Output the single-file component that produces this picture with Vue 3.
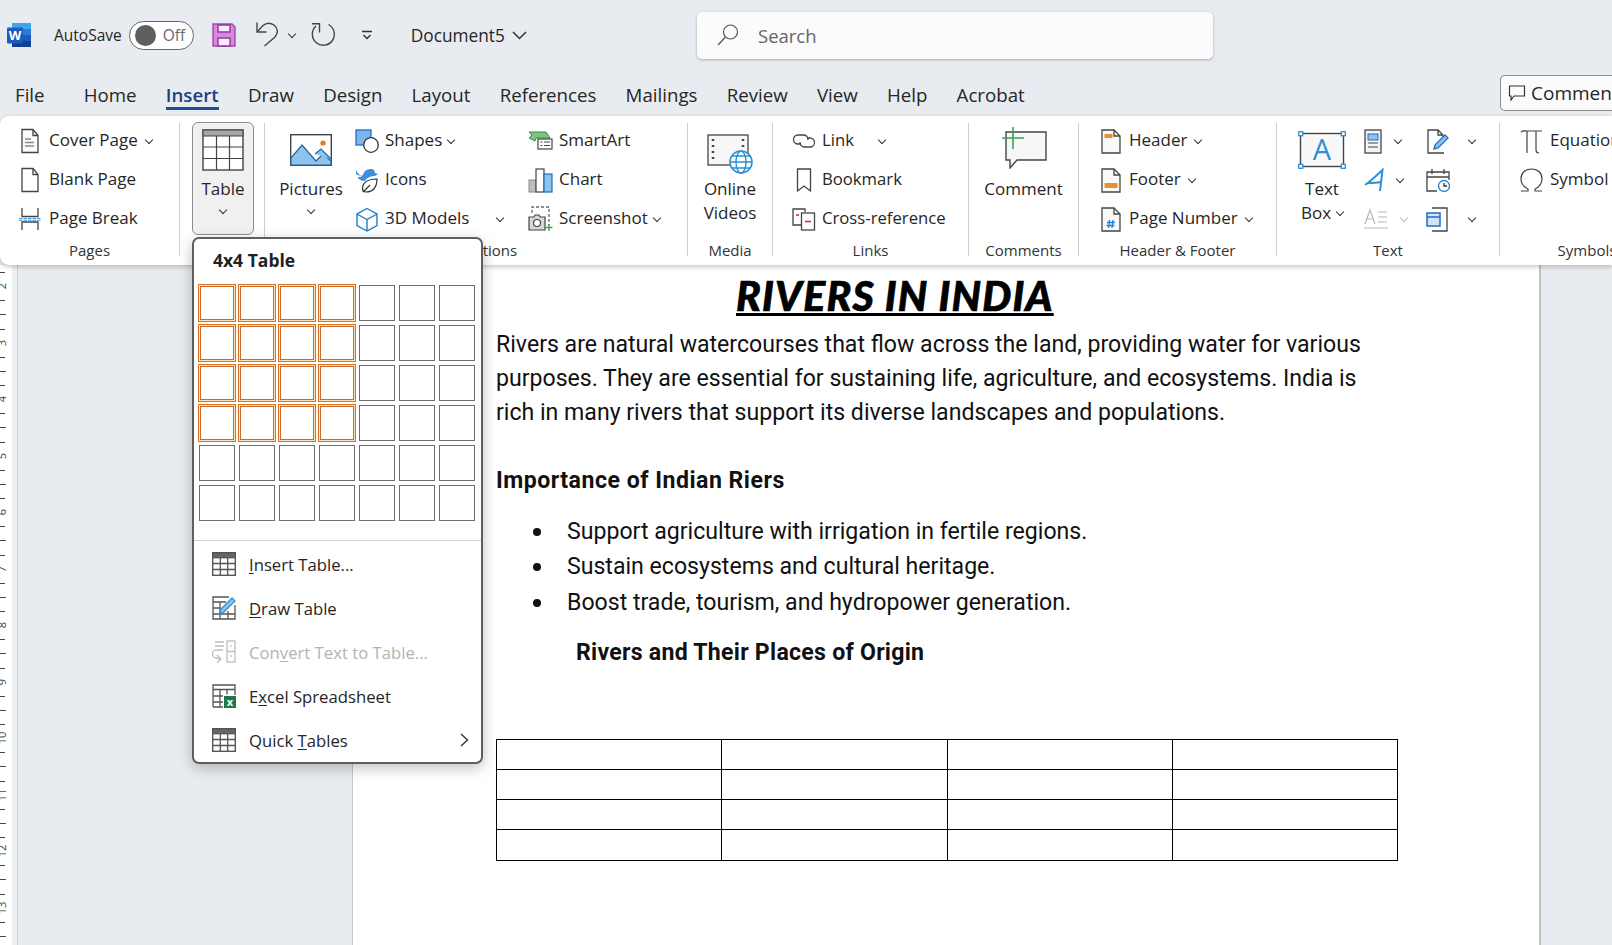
<template>
  <div class="app">
    <!-- title bar -->
    <div class="titlebar">
      <div class="qat">
        <svg class="word" width="24" height="24" viewBox="0 0 24 24">
          <rect x="5" y="0" width="19" height="6" fill="#41a5ee" />
          <rect x="5" y="6" width="19" height="6" fill="#2b7cd3" />
          <rect x="5" y="12" width="19" height="6" fill="#185abd" />
          <rect x="5" y="18" width="19" height="6" fill="#103f91" />
          <rect x="0" y="4.500" width="16" height="16" rx="1" fill="#1a5cbf" />
          <text x="8" y="17" text-anchor="middle" class="word-w">W</text>
        </svg>
        <span class="autosave">AutoSave</span>
        <div class="toggle"><i class="knob"></i><span>Off</span></div>
        <svg class="save" width="24" height="24" viewBox="0 0 24 24">
          <path d="M1 1h19l3 3v19H1z" fill="#d48ad8" stroke="#a544b4" stroke-width="1.4" />
          <path d="M6 2h12v7H6zM6 15h12v8H6z" fill="#fbeafc" stroke="#8f3a9e" stroke-width="1.4" />
        </svg>
        <svg class="undo" width="24" height="26" viewBox="0 0 24 26" fill="none" stroke="#444" stroke-width="1.4">
          <path d="M1 .5V10h9.500" />
          <path d="M1.500 9.500 7 3.500c3.500-3 8-2.500 11-.5 4 3 4.500 8 1 12L8.500 24" />
        </svg>
        <i class="chev qchev"></i>
        <svg class="redo" width="26" height="26" viewBox="0 0 26 26" fill="none" stroke="#444" stroke-width="1.4">
          <path d="M2 1.700h7.500V10.500" />
          <path d="M6 4a11 11 0 1 0 12.500-1.500" />
        </svg>
        <svg class="custom" width="12" height="10" viewBox="0 0 12 10" fill="none" stroke="#333" stroke-width="1.5">
          <path d="M1 1.500h10M2.500 5 6 8.500 9.500 5" />
        </svg>
        <span class="docname">Document5</span>
        <svg class="docchev" width="15" height="9" viewBox="0 0 15 9" fill="none" stroke="#333" stroke-width="1.5">
          <path d="M1 1l6.500 6.500L14 1" />
        </svg>
      </div>
      <div class="search">
        <svg width="22" height="22" viewBox="0 0 22 22" fill="none" stroke="#555" stroke-width="1.2">
          <circle cx="13.500" cy="8" r="7" />
          <path d="M8.500 13 1 21" />
        </svg>
        <span>Search</span>
      </div>
    </div>

    <!-- tabs -->
    <div class="tabs">
      <span v-for="t in tabs" :key="t" class="tab" :class="{ on: t === 'Insert', file: t === 'File' }">{{ t }}</span>
      <div class="comments">
        <svg width="18" height="18" viewBox="0 0 18 18" fill="none" stroke="#333" stroke-width="1.2">
          <path d="M1.500 2h15v10H6l-3 4v-4H1.500z" />
        </svg>
        <span>Comments</span>
      </div>
    </div>

    <!-- ribbon -->
    <div class="ribbon">
      <section class="group pages">
        <div class="body">
          <div class="rows">
            <div class="row">
              <svg width="22" height="26" viewBox="0 0 22 26" fill="none" stroke="#444" stroke-width="1.3">
                <path d="M3 1.500h11l5 6v17H3z" fill="#fafafa" />
                <path d="M14 1.500v6h5" />
                <path d="M6 11h6M6 14.500h9M6 18h9" stroke="#8a8a8a" />
              </svg>
              <span>Cover Page</span><i class="chev"></i>
            </div>
            <div class="row">
              <svg width="22" height="26" viewBox="0 0 22 26" fill="none" stroke="#444" stroke-width="1.3">
                <path d="M3 1.500h11l5 6v17H3z" fill="#fff" />
                <path d="M14 1.500v6h5" />
              </svg>
              <span>Blank Page</span>
            </div>
            <div class="row">
              <svg width="22" height="24" viewBox="0 0 22 24" fill="none" stroke="#444" stroke-width="1.3">
                <path d="M3 1v8.500h16V1M3 23v-8h16V23" />
                <path d="M0 11.500h22M0 13.300h22" stroke="#2a8ad4" stroke-dasharray="3.500 1" stroke-width=".9" />
              </svg>
              <span>Page Break</span>
            </div>
          </div>
        </div>
        <div class="label">Pages</div>
      </section>

      <section class="group tables">
        <div class="body">
          <div class="big tablebtn">
            <div class="big-icon">
              <svg width="42" height="42" viewBox="0 0 42 42">
                <rect x="1" y="1" width="40" height="40" fill="#fff" stroke="#444" stroke-width="1.4" />
                <rect x="1" y="1" width="40" height="6" fill="#a6a6a6" stroke="#444" stroke-width="1" />
                <path d="M14.500 7v34M27.500 7v34M1 18h40M1 29.500h40" stroke="#444" stroke-width="1.200" fill="none" />
              </svg>
            </div>
            <span>Table</span>
            <i class="chev"></i>
          </div>
        </div>
        <div class="label"></div>
      </section>

      <section class="group illus">
        <div class="body">
          <div class="big pictures">
            <div class="big-icon">
              <svg width="42" height="32" viewBox="0 0 42 32">
                <rect x=".7" y=".7" width="40.600" height="30.600" fill="#fff" stroke="#444" stroke-width="1.400" />
                <path d="M1 24 12 11l14 16 5-5 2-2 8 7v4H1z" fill="#8fc3ec" stroke="#2367a0" stroke-width="1.200" />
                <path d="M25 20l6-5 10 10" fill="#8fc3ec" stroke="#2367a0" stroke-width="1.200" />
                <circle cx="33" cy="9" r="2.600" fill="#e07a1f" />
              </svg>
            </div>
            <span>Pictures</span>
            <i class="chev"></i>
          </div>
          <div class="rows col-a">
            <div class="row">
              <svg width="24" height="25" viewBox="0 0 24 25">
                <rect x="1" y="1" width="15" height="15" fill="#7fb4ea" stroke="#1f6fc4" stroke-width="1.300" />
                <circle cx="16" cy="16" r="7.300" fill="#fff" stroke="#333" stroke-width="1.300" />
              </svg>
              <span>Shapes</span><i class="chev"></i>
            </div>
            <div class="row">
              <svg width="24" height="25" viewBox="0 0 24 25">
                <path d="M1 6c3 2 6 2 7 1 1-4 4-6 8-6 3 0 4 2 4 4l3 1-3 2c-3 0-8 1-10 5-2 0-7-1-7-4 2 0 3 0 4-1-3-1-5-4-6-6z" fill="#3f8fd8" />
                <path d="M8 23c-2-7 3-12 14-12 0 8-4 13-11 13-1 0-2-1-3-1zm0 1 7-7" fill="#fff" stroke="#333" stroke-width="1.200" />
              </svg>
              <span>Icons</span>
            </div>
            <div class="row">
              <svg width="24" height="25" viewBox="0 0 24 25" fill="none" stroke="#1d7fc9" stroke-width="1.400">
                <path d="M12 1.500 22 7v11.500L12 24 2 18.500V7zM2 7l10 5.500L22 7M12 12.500V24" />
              </svg>
              <span>3D Models</span><i class="chev far"></i>
            </div>
          </div>
          <div class="rows col-b">
            <div class="row">
              <svg width="25" height="25" viewBox="0 0 25 25">
                <path d="M1 3h17l4 6H8l-1 3 -6-3 3-3z" fill="#7cc47f" stroke="#2f8f45" stroke-width="1" />
                <rect x="10" y="10" width="14" height="10" fill="#fff" stroke="#444" stroke-width="1.200" />
                <path d="M12.500 13h2M16 13h6M12.500 16.500h2M16 16.500h6" stroke="#444" stroke-width="1.200" />
              </svg>
              <span>SmartArt</span>
            </div>
            <div class="row">
              <svg width="25" height="25" viewBox="0 0 25 25">
                <rect x="1" y="12" width="7" height="12" fill="#bdbdbd" stroke="#8a8a8a" />
                <rect x="8" y="1" width="8" height="23" fill="#fff" stroke="#444" stroke-width="1.200" />
                <rect x="16" y="6" width="8" height="18" fill="#8fc3ec" stroke="#1f6fc4" stroke-width="1.200" />
              </svg>
              <span>Chart</span>
            </div>
            <div class="row">
              <svg width="25" height="26" viewBox="0 0 25 26">
                <path d="M4 7V1h17v18" fill="none" stroke="#666" stroke-width="1.300" stroke-dasharray="3 2" />
                <path d="M1 11h5l1-2h4l1 2h5v13H1z" fill="#d8d8d8" stroke="#444" stroke-width="1.200" />
                <circle cx="9" cy="17" r="3.500" fill="#fff" stroke="#444" stroke-width="1.200" />
                <path d="M21 18v7M17.500 21.500h7" stroke="#3ba055" stroke-width="1.400" />
              </svg>
              <span>Screenshot</span><i class="chev"></i>
            </div>
          </div>
        </div>
        <div class="label">Illustrations</div>
      </section>

      <section class="group media">
        <div class="body">
          <div class="big online">
            <div class="big-icon">
              <svg class="shift-down" width="46" height="40" viewBox="0 0 46 40">
                <rect x="1" y="1" width="40" height="30" fill="#f7f7f7" stroke="#444" stroke-width="1.300" />
                <path d="M6 5v2M6 11v2M6 17v2M6 23v2M36 5v2M36 11v2" stroke="#444" stroke-width="2.500" />
                <circle cx="34" cy="28" r="11" fill="#fff" stroke="#2d8fd4" stroke-width="1.600" />
                <ellipse cx="34" cy="28" rx="5" ry="11" fill="none" stroke="#2d8fd4" stroke-width="1.400" />
                <path d="M23 28h22M25 22h18M25 34h18" stroke="#2d8fd4" stroke-width="1.400" />
              </svg>
            </div>
            <span>Online</span>
            <span>Videos</span>
          </div>
        </div>
        <div class="label">Media</div>
      </section>

      <section class="group links">
        <div class="body">
          <div class="rows">
            <div class="row">
              <svg width="24" height="16" viewBox="0 0 24 16" fill="none" stroke="#444" stroke-width="1.300">
                <path d="M9 11H6a4.500 4.500 0 0 1 0-9h6a4.500 4.500 0 0 1 4 5" />
                <path d="M15 5h3a4.500 4.500 0 0 1 0 9h-6a4.500 4.500 0 0 1-4-5" />
              </svg>
              <span>Link</span><i class="chev far"></i>
            </div>
            <div class="row">
              <svg width="24" height="25" viewBox="0 0 24 25" fill="none" stroke="#444" stroke-width="1.300">
                <path d="M5.500 1h13v22l-6.500-5-6.500 5z" />
              </svg>
              <span>Bookmark</span>
            </div>
            <div class="row">
              <svg width="24" height="25" viewBox="0 0 24 25" fill="none" stroke="#444" stroke-width="1.300">
                <path d="M10 18H1V2h12v3" />
                <rect x="9.500" y="6" width="13" height="17" fill="#fff" />
                <path d="M13 14.500h6" stroke="#d13438" stroke-width="1.600" />
                <path d="M4 8h3" stroke="#d13438" stroke-width="1.600" />
              </svg>
              <span>Cross-reference</span>
            </div>
          </div>
        </div>
        <div class="label">Links</div>
      </section>

      <section class="group commentsg">
        <div class="body">
          <div class="big newcomment">
            <div class="big-icon">
              <svg class="shift-up" width="46" height="42" viewBox="0 0 46 42">
                <path d="M5 5h40v28H16L9 41v-8H5z" fill="#f7f7f7" stroke="#444" stroke-width="1.400" />
                <path d="M12 0v22M1 11h22" stroke="#3ba055" stroke-width="1.600" />
              </svg>
            </div>
            <span>Comment</span>
          </div>
        </div>
        <div class="label">Comments</div>
      </section>

      <section class="group hf">
        <div class="body">
          <div class="rows">
            <div class="row">
              <svg width="20" height="25" viewBox="0 0 20 25">
                <path d="M1 1h12l6 6v17H1z" fill="#fafafa" stroke="#444" stroke-width="1.300" />
                <path d="M13 1v6h6" fill="none" stroke="#444" stroke-width="1.300" />
                <rect x="3.500" y="5" width="8" height="4" fill="#e8912d" />
              </svg>
              <span>Header</span><i class="chev"></i>
            </div>
            <div class="row">
              <svg width="20" height="25" viewBox="0 0 20 25">
                <path d="M1 1h12l6 6v17H1z" fill="#fafafa" stroke="#444" stroke-width="1.300" />
                <path d="M13 1v6h6" fill="none" stroke="#444" stroke-width="1.300" />
                <rect x="3.500" y="15" width="13" height="5" fill="#e8912d" />
              </svg>
              <span>Footer</span><i class="chev"></i>
            </div>
            <div class="row">
              <svg width="20" height="25" viewBox="0 0 20 25">
                <path d="M1 1h12l6 6v17H1z" fill="#fafafa" stroke="#444" stroke-width="1.300" />
                <path d="M13 1v6h6" fill="none" stroke="#444" stroke-width="1.300" />
                <path d="M8.500 13l-1 8M12 13l-1 8M6 15.500h8M5.500 18.500h8" stroke="#1f7fd1" stroke-width="1.300" />
              </svg>
              <span>Page Number</span><i class="chev"></i>
            </div>
          </div>
        </div>
        <div class="label">Header &amp; Footer</div>
      </section>

      <section class="group textg">
        <div class="body">
          <div class="big textbox">
            <div class="big-icon">
              <svg width="48" height="38" viewBox="0 0 48 38">
                <rect x="2.500" y="2.500" width="43" height="33" fill="#f8f8f8" stroke="#444" stroke-width="1.400" />
                <rect x=".7" y=".7" width="4" height="4" fill="#fff" stroke="#2d8fd4" stroke-width="1.300" />
                <rect x="43.300" y=".7" width="4" height="4" fill="#fff" stroke="#2d8fd4" stroke-width="1.300" />
                <rect x=".7" y="33.300" width="4" height="4" fill="#fff" stroke="#2d8fd4" stroke-width="1.300" />
                <rect x="43.300" y="33.300" width="4" height="4" fill="#fff" stroke="#2d8fd4" stroke-width="1.300" />
                <text x="24" y="29" text-anchor="middle" class="box-a">A</text>
              </svg>
            </div>
            <span>Text</span>
            <span class="boxline">Box<i class="chev"></i></span>
          </div>
          <div class="rows col-c">
            <div class="row">
              <svg width="18" height="25" viewBox="0 0 18 25">
                <rect x="1" y="1" width="16" height="23" fill="#f4f4f4" stroke="#444" stroke-width="1.300" />
                <rect x="4" y="5" width="10" height="6" fill="#8fc3ec" stroke="#1f6fc4" />
                <path d="M4 14h10M4 18h10" stroke="#9a9a9a" stroke-width="2" />
              </svg>
              <i class="chev"></i>
            </div>
            <div class="row">
              <svg width="20" height="25" viewBox="0 0 20 25" fill="none" stroke="#2d8fd4" stroke-width="2">
                <path d="M1 17C7 13 13 7 18.500 2L16 23M4 15c4 0 8 0 12.500-1" />
              </svg>
              <i class="chev"></i>
            </div>
            <div class="row off">
              <svg width="24" height="24" viewBox="0 0 24 24" fill="none" stroke="#b8b8b8" stroke-width="1.200">
                <path d="M1 17 6 3l5 14M3 12h6M14 5h9M14 10h9M14 15h9M0 21h24" />
              </svg>
              <i class="chev"></i>
            </div>
          </div>
          <div class="rows col-d">
            <div class="row">
              <svg width="23" height="25" viewBox="0 0 23 25" fill="none" stroke="#444" stroke-width="1.300">
                <path d="M12 24H2V1h10l5 5v3M12 1v5h5M2 24h16" />
                <path d="M8 20l1-4L19 6l3 3-10 10z" fill="#8fc3ec" stroke="#1f6fc4" />
              </svg>
              <i class="chev far"></i>
            </div>
            <div class="row">
              <svg width="24" height="25" viewBox="0 0 24 25" fill="none" stroke="#444" stroke-width="1.300">
                <path d="M11 23H1V4h22v8M1 9h22M6 1v5M18 1v5" />
                <circle cx="18" cy="18" r="5.500" fill="#fff" stroke="#1f7fd1" />
                <path d="M18 15v3h3" stroke="#333" />
              </svg>
            </div>
            <div class="row">
              <svg width="23" height="25" viewBox="0 0 23 25">
                <path d="M6 1h15v23H6" fill="none" stroke="#444" stroke-width="1.300" />
                <rect x="1" y="6" width="13" height="13" fill="#cfe4f7" stroke="#1f6fc4" stroke-width="1.500" />
                <path d="M1 10h13" stroke="#1f6fc4" stroke-width="1.500" />
              </svg>
              <i class="chev far"></i>
            </div>
          </div>
        </div>
        <div class="label">Text</div>
      </section>

      <section class="group symbols">
        <div class="body">
          <div class="rows">
            <div class="row">
              <svg width="23" height="25" viewBox="0 0 23 25" fill="none" stroke="#444" stroke-width="1.200">
                <path d="M1 3c2-2 4-1 6-1h15M7 2v22M16 2v19c0 2 1 3 3 3" />
              </svg>
              <span>Equation</span>
            </div>
            <div class="row">
              <svg width="23" height="25" viewBox="0 0 23 25" fill="none" stroke="#444" stroke-width="1.200">
                <path d="M1 23h7v-2C4 19 1 15 1 11 1 5 5 1 11.500 1S22 5 22 11c0 4-3 8-7 10v2h7" />
              </svg>
              <span>Symbol</span>
            </div>
          </div>
        </div>
        <div class="label">Symbols</div>
      </section>
    </div>

    <!-- document -->
    <div class="workspace">
      <div class="ruler">
        <div v-for="(m, i) in marks" :key="i" class="mark" :class="m.kind">
          <span v-if="m.kind === 'num'">{{ m.n }}</span>
        </div>
      </div>
      <div class="ruler-edge"></div>
      <div class="page">
        <h1 class="doc-title">RIVERS IN INDIA</h1>
        <p class="para">
          Rivers are natural watercourses that flow across the land, providing water for various<br />
          purposes. They are essential for sustaining life, agriculture, and ecosystems. India is<br />
          rich in many rivers that support its diverse landscapes and populations.
        </p>
        <h2 class="head">Importance of Indian Riers</h2>
        <ul class="list">
          <li>Support agriculture with irrigation in fertile regions.</li>
          <li>Sustain ecosystems and cultural heritage.</li>
          <li>Boost trade, tourism, and hydropower generation.</li>
        </ul>
        <h2 class="head sub">Rivers and Their Places of Origin</h2>
        <table class="doc-table">
          <tbody>
            <tr v-for="r in 4" :key="r">
              <td v-for="c in 4" :key="c"></td>
            </tr>
          </tbody>
        </table>
      </div>
    </div>

    <!-- table dropdown -->
    <div class="menu">
      <div class="menu-title">4x4 Table</div>
      <div class="picker">
        <i v-for="c in cells" :key="c.id" class="cell" :class="{ sel: c.sel }"></i>
      </div>
      <div class="menu-sep"></div>
      <div class="item">
        <svg width="24" height="24" viewBox="0 0 24 24" fill="none" stroke="#555" stroke-width="1.300">
          <rect x=".7" y=".7" width="22.600" height="22.600" fill="#fff" stroke-width="1.400" />
          <rect x=".7" y=".7" width="22.600" height="5" fill="#666" />
          <path d="M8.300 6v17M15.700 6v17M1 11.500h22M1 17.500h22" />
        </svg>
        <span><u>I</u>nsert Table...</span>
      </div>
      <div class="item">
        <svg width="24" height="24" viewBox="0 0 24 24" fill="none" stroke="#555" stroke-width="1.300">
          <path d="M17 1H1v22h22V9M1 6h13M8 6v17M16 15v8M1 12h7M1 18h22" />
          <path d="M8 18l1-5L20 2l3 3-11 11z" fill="#8fc3ec" stroke="#2d8fd4" />
        </svg>
        <span><u>D</u>raw Table</span>
      </div>
      <div class="item off">
        <svg width="24" height="24" viewBox="0 0 24 24" fill="none" stroke="#bdbdbd" stroke-width="1.300">
          <path d="M3 2h9M3 6h9M11 10H5a4 4 0 0 0-1 8l4 1M5 15l4 4-4 4" />
          <rect x="15" y="1" width="8" height="21" />
          <path d="M15 11.500h8M19 5v2M19 15v2" />
        </svg>
        <span>Con<u>v</u>ert Text to Table...</span>
      </div>
      <div class="item">
        <svg width="24" height="24" viewBox="0 0 24 24" fill="none" stroke="#555" stroke-width="1.300">
          <path d="M1 23V1h22v10M1 5.500h22M8 5.500V23M15 5.500v5M1 12h10M1 18h10M1 23h10" />
          <rect x="12" y="12" width="12" height="12" fill="#1d7a46" stroke="none" />
          <text x="18" y="22" text-anchor="middle" class="xl-x">x</text>
        </svg>
        <span>E<u>x</u>cel Spreadsheet</span>
      </div>
      <div class="item">
        <svg width="24" height="24" viewBox="0 0 24 24" fill="none" stroke="#555" stroke-width="1.300">
          <rect x=".7" y=".7" width="22.600" height="22.600" fill="#fff" stroke-width="1.400" />
          <rect x=".7" y=".7" width="22.600" height="5" fill="#666" />
          <path d="M8.300 6v17M15.700 6v17M1 11.500h22M1 17.500h22" />
        </svg>
        <span>Quick <u>T</u>ables</span>
        <svg class="arrow" width="9" height="14" viewBox="0 0 9 14" fill="none" stroke="#333" stroke-width="1.400">
          <path d="M1 1l6.500 6L1 13" />
        </svg>
      </div>
    </div>
  </div>
</template>

<script setup>
const tabs = ['File', 'Home', 'Insert', 'Draw', 'Design', 'Layout', 'References', 'Mailings', 'Review', 'View', 'Help', 'Acrobat']

// 7 x 6 picker, first four by four highlighted
const cells = []
for (let r = 0; r < 6; r++) {
  for (let c = 0; c < 7; c++) {
    cells.push({ id: r + '-' + c, sel: r < 4 && c < 4 })
  }
}

// vertical ruler: a number every fourth mark
const marks = [{ kind: 'tick' }]
for (let n = 2; n <= 13; n++) {
  marks.push({ kind: 'num', n }, { kind: 'tick' }, { kind: 'long' }, { kind: 'tick' })
}
</script>

<style>
html,
body {
  margin: 0;
  background: #e8ecf0;
  overflow: hidden;
}
</style>

<style scoped>
.app {
  position: relative;
  width: 1612px;
  height: 945px;
  overflow: hidden;
  background: #e8ecf0;
  color: #262626;
  font-family: "Open Sans", "Noto Sans", sans-serif;
  font-size: 17px;
}

.titlebar {
  display: flex;
  align-items: center;
  height: 70px;
}
.qat {
  display: flex;
  align-items: center;
  width: 697px;
  flex: none;
  padding-left: 7px;
  box-sizing: border-box;
}
.word-w {
  font: 700 13px "Open Sans", sans-serif;
  fill: #fff;
}
.autosave {
  margin-left: 23px;
  font-size: 15.5px;
}
.toggle {
  display: flex;
  align-items: center;
  width: 65px;
  height: 29px;
  margin-left: 7px;
  box-sizing: border-box;
  padding-left: 5px;
  border: 1px solid #666;
  border-radius: 15px;
  background: #fff;
  font-size: 15.5px;
  color: #6a6a6a;
}
.knob {
  width: 21px;
  height: 21px;
  border-radius: 50%;
  background: #5f5f5f;
  margin-right: 7px;
}
.save {
  margin-left: 18px;
}
.undo {
  margin-left: 20px;
}
.qchev {
  margin-left: 9px;
  margin-right: 15px;
}
.custom {
  margin-left: 25px;
}
.docname {
  margin-left: 38px;
  font-size: 17.3px;
}
.docchev {
  margin-left: 7px;
}
.search {
  display: flex;
  align-items: center;
  gap: 19px;
  width: 516px;
  height: 47px;
  box-sizing: border-box;
  padding-left: 20px;
  border-radius: 5px;
  background: #fbfbfb;
  box-shadow: 0 1px 3px rgba(0, 0, 0, 0.28);
  font-size: 18.5px;
  color: #666;
}

.tabs {
  display: flex;
  align-items: center;
  gap: 29.2px;
  height: 46px;
  padding-left: 15px;
  font-size: 18.7px;
}
.tab {
  position: relative;
  padding-top: 4px;
  line-height: 26px;
}
.tab.file {
  margin-right: 10px;
}
.tab.on {
  font-weight: 600;
  color: #1d3f7c;
}
.tab.on::after {
  content: "";
  position: absolute;
  left: 0;
  right: 0;
  bottom: -2px;
  height: 3px;
  background: #1a4d9e;
}
.comments {
  display: flex;
  align-items: center;
  gap: 5px;
  flex: none;
  width: 112px;
  height: 36px;
  margin-left: auto;
  padding-left: 7px;
  box-sizing: border-box;
  border: 1px solid #8c8c8c;
  border-right: 0;
  border-radius: 5px 0 0 5px;
  background: #fbfbfb;
  white-space: nowrap;
  overflow: hidden;
  font-size: 19px;
}
.comments svg {
  flex: none;
}

.ribbon {
  position: relative;
  z-index: 1;
  display: flex;
  height: 149px;
  box-sizing: border-box;
  padding-top: 7px;
  border-radius: 9px 0 0 9px;
  background: #fff;
  box-shadow: 0 2px 5px rgba(0, 0, 0, 0.22);
  white-space: nowrap;
}
.group {
  flex: none;
  display: flex;
  flex-direction: column;
  height: 133px;
  box-sizing: border-box;
  border-right: 1px solid #cfcfcf;
}
.body {
  display: flex;
  flex: 1;
  min-height: 0;
}
.label {
  height: 20px;
  margin-top: -1px;
  margin-bottom: -4px;
  line-height: 20px;
  font-size: 15px;
  text-align: center;
  color: #333;
}
.rows {
  display: flex;
  flex-direction: column;
  gap: 3px;
}
.row {
  display: flex;
  align-items: center;
  gap: 8px;
  height: 36px;
}
.row span {
  margin-bottom: 4px;
}
.row svg {
  flex: none;
}
.row.off .chev {
  border-color: #bbb;
}
.chev {
  display: inline-block;
  flex: none;
  width: 5px;
  height: 5px;
  margin-top: -3px;
  border-right: 1.5px solid #333;
  border-bottom: 1.5px solid #333;
  transform: rotate(45deg);
}
.chev.far {
  margin-left: 22px;
}

.big {
  display: flex;
  flex-direction: column;
  align-items: center;
  line-height: 24px;
}
.big-icon {
  display: flex;
  align-items: center;
  justify-content: center;
  height: 54px;
}
.big .chev {
  margin-top: 6px;
}
.shift-down {
  margin-top: 8px;
}
.shift-up {
  margin-bottom: 5px;
}

.pages {
  width: 180px;
}
.pages .body {
  padding-left: 19px;
}
.tables {
  width: 85px;
}
.tables .body {
  padding-left: 12px;
}
.tablebtn {
  width: 62px;
  height: 113px;
  margin-top: -1px;
  box-sizing: border-box;
  border: 1px solid #8e8e8e;
  border-radius: 6px;
  background: #f0f0f0;
}
.illus {
  width: 423px;
}
.illus .body {
  padding-left: 16px;
}
.pictures {
  width: 60px;
}
.col-a {
  margin-left: 14px;
  width: 173px;
}
.col-a .row,
.col-b .row {
  gap: 6px;
}
.media {
  width: 85px;
}
.online {
  width: 84px;
}
.links {
  width: 196px;
}
.links .body {
  padding-left: 19px;
}
.links .row {
  gap: 6px;
  font-size: 16.7px;
}
.links .chev.far {
  margin-left: 19px;
}
.commentsg {
  width: 110px;
}
.newcomment {
  width: 109px;
}
.hf {
  width: 198px;
}
.hf .body {
  padding-left: 22px;
}
.textg {
  width: 223px;
}
.textg .body {
  padding-left: 21px;
}
.textbox {
  width: 48px;
}
.box-a {
  font: 400 29px "Open Sans", sans-serif;
  fill: #2d8fd4;
}
.boxline {
  display: flex;
  align-items: center;
  gap: 6px;
}
.boxline .chev {
  margin-top: -2px;
}
.col-c {
  margin-left: 18px;
  width: 62px;
}
.col-c .row {
  gap: 13px;
}
.col-d .chev.far {
  margin-left: 12px;
}
.symbols {
  width: 174px;
  border-right: 0;
}
.symbols .body {
  padding-left: 20px;
}
.symbols .row {
  gap: 7px;
}

.workspace {
  position: relative;
  display: flex;
  height: 680px;
  overflow: hidden;
}
.ruler {
  flex: none;
  width: 12px;
  background: #fff;
  overflow: hidden;
}
.mark {
  position: relative;
  height: 14.125px;
}
.mark.tick::before,
.mark.long::before {
  content: "";
  position: absolute;
  left: 0;
  top: 7px;
  width: 5px;
  height: 1px;
  background: #444;
}
.mark.long::before {
  width: 6px;
}
.mark span {
  position: absolute;
  left: -5px;
  top: 0;
  width: 14px;
  line-height: 14px;
  text-align: center;
  font-size: 11px;
  color: #444;
  transform: rotate(-90deg);
}
.ruler-edge {
  flex: none;
  width: 5px;
  background: #edf0f3;
  border-right: 1px solid #cdd3d8;
}
.page {
  flex: none;
  width: 1189px;
  margin-left: 334px;
  box-sizing: border-box;
  padding-left: 143px;
  border-left: 1px solid #c8c8c8;
  border-right: 2px solid #c4c4c4;
  background: #fff;
  color: #111;
  font-family: Roboto, "Open Sans", sans-serif;
}
.doc-title {
  width: fit-content;
  margin: 6px 0 6.5px 240px;
  font: italic 900 41px/50px Lato, sans-serif;
  letter-spacing: 1.2px;
  -webkit-text-stroke: 0.7px #000;
  color: #000;
  text-decoration: underline;
  text-decoration-thickness: 3px;
}
.para {
  margin: 0;
  font-size: 23.1px;
  line-height: 34px;
}
.head {
  margin: 34px 0 0;
  font-size: 23.1px;
  font-weight: 700;
  line-height: 34px;
  letter-spacing: 0.5px;
}
.head.sub {
  margin: 16px 0 0 80px;
  letter-spacing: 0.26px;
}
.list {
  margin: 16px 0 0;
  padding: 0 0 0 71px;
  list-style: none;
  font-size: 23.1px;
  line-height: 35.5px;
}
.list li {
  position: relative;
}
.list li::before {
  content: "";
  position: absolute;
  left: -34px;
  top: 14px;
  width: 8px;
  height: 8px;
  border-radius: 50%;
  background: #111;
}
.doc-table {
  width: 902px;
  margin-top: 68.5px;
  table-layout: fixed;
  border-collapse: collapse;
}
.doc-table td {
  height: 29.25px;
  padding: 0;
  border: 1px solid #000;
}

.menu {
  position: absolute;
  z-index: 2;
  left: 192px;
  top: 237px;
  width: 291px;
  box-sizing: border-box;
  border: 2px solid #5e5e5e;
  border-radius: 7px;
  background: #fff;
  box-shadow: 0 4px 14px rgba(0, 0, 0, 0.25);
  font-size: 16.7px;
  white-space: nowrap;
}
.menu-title {
  margin: 9px 0 13px 19px;
  font-size: 17.5px;
  font-weight: 700;
  line-height: 24px;
  color: #222;
}
.picker {
  display: grid;
  grid-template-columns: repeat(7, 36px);
  grid-auto-rows: 36px;
  gap: 4px;
  padding-left: 5px;
}
.cell {
  box-sizing: border-box;
  border: 1px solid #6e6e6e;
}
.cell.sel {
  border-color: #ffe3b8;
  outline: 1px solid #dd6f22;
  box-shadow: inset 0 0 0 1px #c8682a;
}
.menu-sep {
  height: 1px;
  margin: 19px 0 1px;
  background: #d2d2d2;
}
.item {
  display: flex;
  align-items: center;
  gap: 13px;
  height: 44px;
  padding-left: 18px;
}
.item.off {
  color: #b3b3b3;
}
.item u {
  text-underline-offset: 2px;
}
.arrow {
  margin-left: auto;
  margin-right: 12px;
}
.xl-x {
  font: 700 11px "Open Sans", sans-serif;
  fill: #fff;
  stroke: none;
}
</style>
